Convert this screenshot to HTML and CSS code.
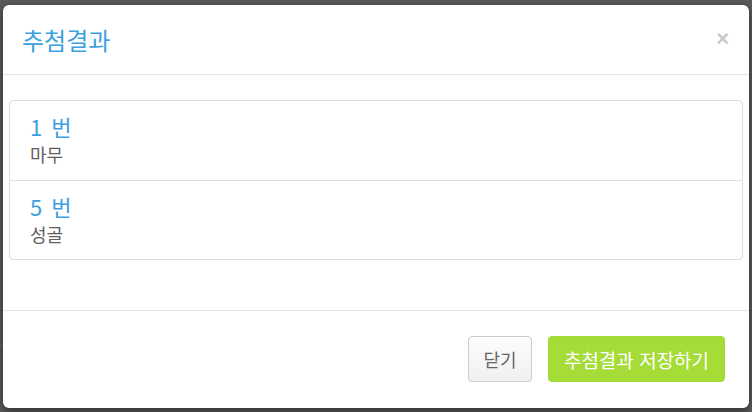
FILE: index.html
```html
<!DOCTYPE html>
<html lang="ko">
<head>
<meta charset="utf-8">
<title>추첨결과</title>
<link rel="stylesheet" href="styles.css">
</head>
<body>
<div class="backdrop-line"></div>
<div class="modal">
  <div class="modal-header">
    <h4 class="modal-title">추첨결과</h4>
    <span class="close">×</span>
  </div>
  <div class="modal-body">
    <ul class="list-group">
      <li class="list-item">
        <div class="num">1 번</div>
        <div class="name">마무</div>
      </li>
      <li class="list-item">
        <div class="num">5 번</div>
        <div class="name">성골</div>
      </li>
    </ul>
  </div>
  <div class="modal-footer">
    <button class="btn btn-default">닫기</button>
    <button class="btn btn-save">추첨결과 저장하기</button>
  </div>
</div>
</body>
</html>
```
FILE: styles.css
```css
html, body {
  margin: 0;
  padding: 0;
}
body {
  background: #5a5a5a;
  width: 752px;
  height: 412px;
  overflow: hidden;
  font-family: "Noto Sans CJK KR", "Noto Sans", sans-serif;
  position: relative;
}
.backdrop-line {
  position: absolute;
  left: 0;
  top: 345px;
  width: 10px;
  height: 1px;
  background: #6e6e6e;
}
.modal {
  position: relative;
  margin: 5px 3px 0 3px;
  height: 403px;
  background: #fff;
  border-radius: 6px;
  box-shadow: 0 3px 9px rgba(0, 0, 0, 0.5);
  display: flex;
  flex-direction: column;
  box-sizing: border-box;
}
.modal-header {
  height: 70px;
  box-sizing: border-box;
  border-bottom: 1px solid #e5e5e5;
  display: flex;
  align-items: center;
  justify-content: space-between;
  padding: 0 20px 0 19px;
}
.modal-title {
  margin: 0;
  font-size: 24px;
  font-weight: 400;
  line-height: 30px;
  color: #3d9fde;
}
.close {
  font-family: "Liberation Sans", Arial, sans-serif;
  font-size: 22px;
  font-weight: 700;
  color: #c9c9c9;
  line-height: 1;
  margin-top: -2px;
}
.modal-body {
  padding: 25px 6px 50px 6px;
}
.list-group {
  list-style: none;
  margin: 0;
  padding: 0;
  border: 1px solid #dddddd;
  border-radius: 4px;
}
.list-item {
  padding: 11px 20px 15px 20px;
  height: 79px;
  box-sizing: border-box;
}
.list-item + .list-item {
  border-top: 1px solid #dddddd;
  height: 79px;
}
.num {
  font-size: 22px;
  line-height: 28px;
  color: #3d9fde;
  word-spacing: 3px;
}
.name {
  margin-top: 2px;
  font-size: 18px;
  line-height: 24px;
  color: #5e5e5e;
}
.modal-footer {
  flex: 1;
  border-top: 1px solid #e5e5e5;
  display: flex;
  justify-content: flex-end;
  align-items: flex-start;
  gap: 16px;
  padding: 25px 24px 0 0;
}
.btn {
  height: 46px;
  border-radius: 4px;
  font-family: "Noto Sans CJK KR", "Noto Sans", sans-serif;
  font-size: 18px;
  padding: 0;
  cursor: pointer;
}
.btn-default {
  width: 64px;
  background: linear-gradient(#fdfdfd, #f0f0f0);
  border: 1px solid #cccccc;
  color: #666666;
}
.btn-save {
  width: 177px;
  background: #a5dc38;
  border: 1px solid #a2d935;
  color: #ffffff;
  font-size: 19px;
}
```
